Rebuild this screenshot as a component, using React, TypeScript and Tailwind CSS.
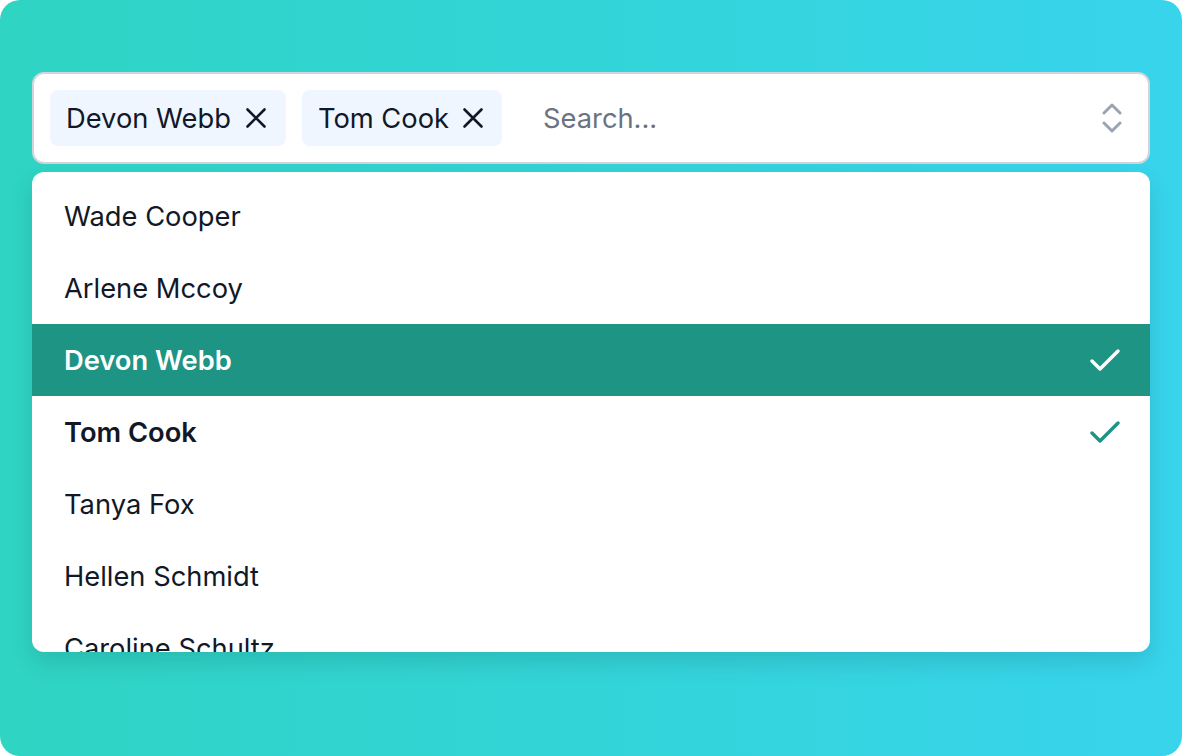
import React from "react";

const people = [
  { name: "Wade Cooper", selected: false, active: false },
  { name: "Arlene Mccoy", selected: false, active: false },
  { name: "Devon Webb", selected: true, active: true },
  { name: "Tom Cook", selected: true, active: false },
  { name: "Tanya Fox", selected: false, active: false },
  { name: "Hellen Schmidt", selected: false, active: false },
  { name: "Caroline Schultz", selected: false, active: false },
];

function XIcon() {
  return (
    <svg width="22" height="22" viewBox="0 0 22 22" fill="none">
      <path d="M2.5 2.5L19.5 19.5M19.5 2.5L2.5 19.5" stroke="#111827" strokeWidth="2.6" strokeLinecap="round" />
    </svg>
  );
}

function Check({ color }: { color: string }) {
  return (
    <svg width="30" height="22" viewBox="0 0 30 22" fill="none">
      <path d="M2 12L10 20L28 2" stroke={color} strokeWidth="3.4" strokeLinecap="round" strokeLinejoin="round" />
    </svg>
  );
}

export default function App() {
  return (
    <div className="w-[1182px] h-[756px] bg-white" style={{ fontFamily: "Inter, 'Noto Sans', sans-serif" }}>
      <div className="w-full h-full rounded-[20px] bg-gradient-to-r from-[#2fd4c3] to-[#38d4ed] px-8 pt-[72px]">
        <div className="h-[92px] bg-white border-2 border-[#d1d5db] rounded-[12px] flex items-center pl-4 pr-[26px]">
          <div className="flex items-center gap-4">
            <div className="h-14 pl-4 pr-[19px] rounded-lg bg-[#eff6ff] flex items-center gap-[14px] text-[27.3px] text-[#111827]">
              <span className="translate-y-[1px]">Devon Webb</span>
              <XIcon />
            </div>
            <div className="h-14 pl-4 pr-[18px] rounded-lg bg-[#eff6ff] flex items-center gap-[13px] text-[27.3px] text-[#111827]">
              <span className="translate-y-[1px]">Tom Cook</span>
              <XIcon />
            </div>
          </div>
          <div className="flex-1 pl-[41px] text-[27.3px] text-[#6b7280] translate-y-[1px]">Search...</div>
          <svg width="20" height="32" viewBox="0 0 20 32" fill="none">
            <path d="M2 11L10 3L18 11M2 21L10 29L18 21" stroke="#9ca3af" strokeWidth="3" strokeLinecap="round" strokeLinejoin="round" />
          </svg>
        </div>
        <div className="mt-2 h-[480px] bg-white rounded-[12px] shadow-[0_10px_24px_rgba(0,0,0,0.12)] overflow-hidden pt-2">
          {people.map((p) => (
            <div
              key={p.name}
              className={
                "h-[72px] pl-8 pr-[30px] flex items-center justify-between text-[27.3px] " +
                (p.active ? "bg-[#1e9485] text-white" : "text-[#111827]") +
                (p.selected ? " font-semibold" : "")
              }
            >
              <span className="translate-y-[1px]">{p.name}</span>
              {p.selected && <Check color={p.active ? "#ffffff" : "#1e9485"} />}
            </div>
          ))}
        </div>
      </div>
    </div>
  );
}
